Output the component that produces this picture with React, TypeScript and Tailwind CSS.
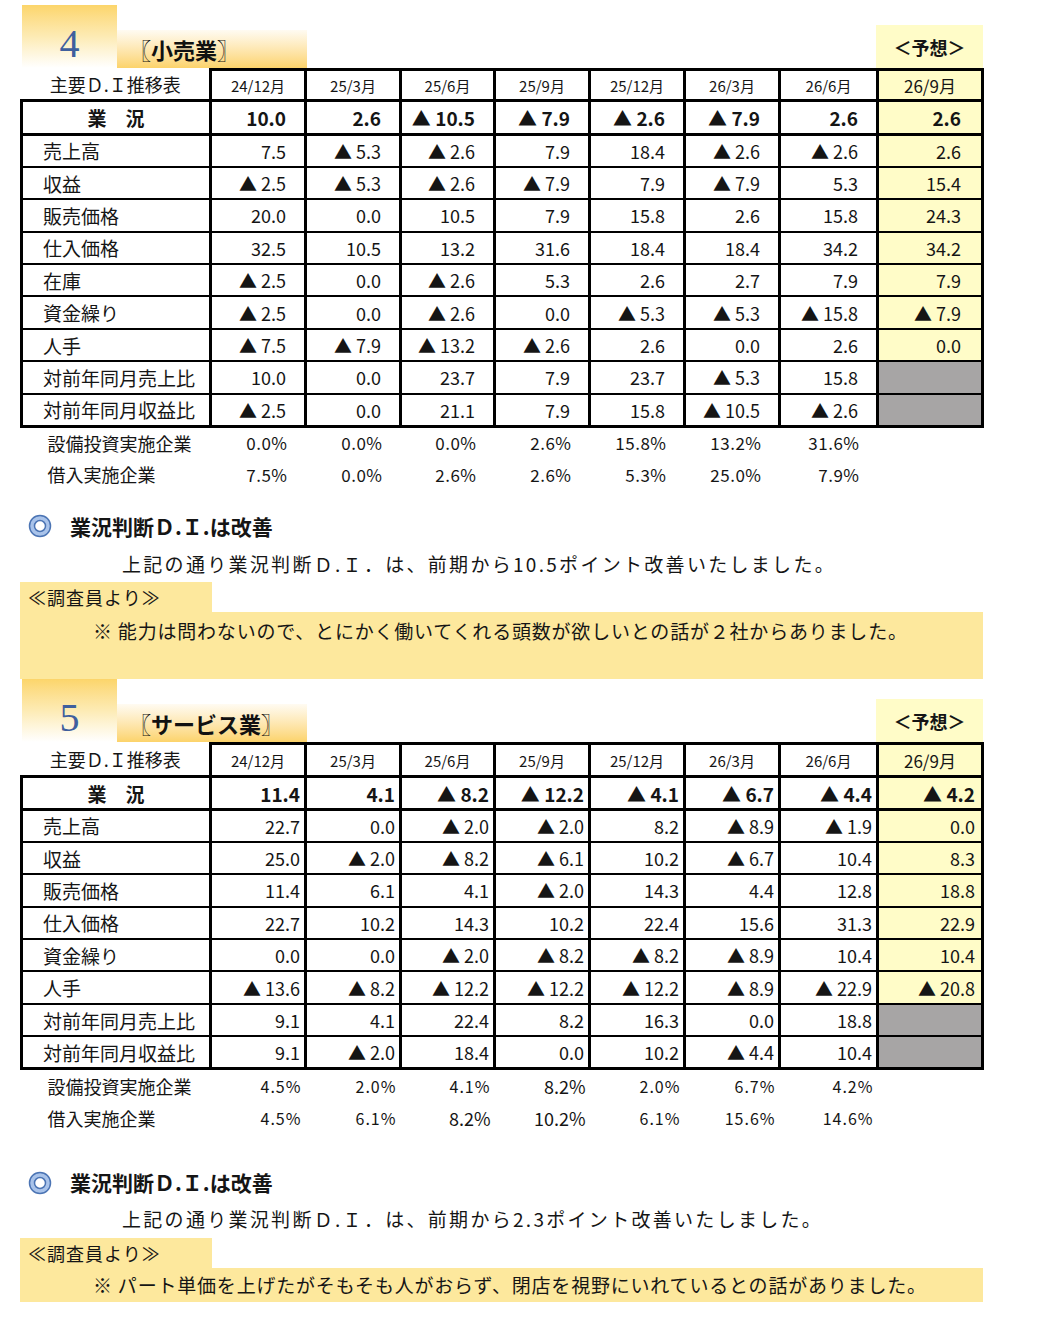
import React from 'react'

type Row = { label: string; values: (string | null)[] }
type Pct = { label: string; values: string[]; big?: number[] }

const cols = ['24/12月', '25/3月', '25/6月', '25/9月', '25/12月', '26/3月', '26/6月', '26/9月']

const retail = {
  no: '4',
  title: '〖小売業〗',
  top: ['10.0', '2.6', '▲10.5', '▲7.9', '▲2.6', '▲7.9', '2.6', '2.6'],
  rows: [
    { label: '売上高', values: ['7.5', '▲5.3', '▲2.6', '7.9', '18.4', '▲2.6', '▲2.6', '2.6'] },
    { label: '収益', values: ['▲2.5', '▲5.3', '▲2.6', '▲7.9', '7.9', '▲7.9', '5.3', '15.4'] },
    { label: '販売価格', values: ['20.0', '0.0', '10.5', '7.9', '15.8', '2.6', '15.8', '24.3'] },
    { label: '仕入価格', values: ['32.5', '10.5', '13.2', '31.6', '18.4', '18.4', '34.2', '34.2'] },
    { label: '在庫', values: ['▲2.5', '0.0', '▲2.6', '5.3', '2.6', '2.7', '7.9', '7.9'] },
    { label: '資金繰り', values: ['▲2.5', '0.0', '▲2.6', '0.0', '▲5.3', '▲5.3', '▲15.8', '▲7.9'] },
    { label: '人手', values: ['▲7.5', '▲7.9', '▲13.2', '▲2.6', '2.6', '0.0', '2.6', '0.0'] },
    { label: '対前年同月売上比', values: ['10.0', '0.0', '23.7', '7.9', '23.7', '▲5.3', '15.8', null] },
    { label: '対前年同月収益比', values: ['▲2.5', '0.0', '21.1', '7.9', '15.8', '▲10.5', '▲2.6', null] },
  ] as Row[],
  pct: [
    { label: '設備投資実施企業', values: ['0.0%', '0.0%', '0.0%', '2.6%', '15.8%', '13.2%', '31.6%'] },
    { label: '借入実施企業', values: ['7.5%', '0.0%', '2.6%', '2.6%', '5.3%', '25.0%', '7.9%'] },
  ] as Pct[],
}

const service = {
  no: '5',
  title: '〖サービス業〗',
  top: ['11.4', '4.1', '▲8.2', '▲12.2', '▲4.1', '▲6.7', '▲4.4', '▲4.2'],
  rows: [
    { label: '売上高', values: ['22.7', '0.0', '▲2.0', '▲2.0', '8.2', '▲8.9', '▲1.9', '0.0'] },
    { label: '収益', values: ['25.0', '▲2.0', '▲8.2', '▲6.1', '10.2', '▲6.7', '10.4', '8.3'] },
    { label: '販売価格', values: ['11.4', '6.1', '4.1', '▲2.0', '14.3', '4.4', '12.8', '18.8'] },
    { label: '仕入価格', values: ['22.7', '10.2', '14.3', '10.2', '22.4', '15.6', '31.3', '22.9'] },
    { label: '資金繰り', values: ['0.0', '0.0', '▲2.0', '▲8.2', '▲8.2', '▲8.9', '10.4', '10.4'] },
    { label: '人手', values: ['▲13.6', '▲8.2', '▲12.2', '▲12.2', '▲12.2', '▲8.9', '▲22.9', '▲20.8'] },
    { label: '対前年同月売上比', values: ['9.1', '4.1', '22.4', '8.2', '16.3', '0.0', '18.8', null] },
    { label: '対前年同月収益比', values: ['9.1', '▲2.0', '18.4', '0.0', '10.2', '▲4.4', '10.4', null] },
  ] as Row[],
  pct: [
    { label: '設備投資実施企業', values: ['4.5%', '2.0%', '4.1%', '8.2%', '2.0%', '6.7%', '4.2%'], big: [3] },
    { label: '借入実施企業', values: ['4.5%', '6.1%', '8.2%', '10.2%', '6.1%', '15.6%', '14.6%'], big: [2, 3] },
  ] as Pct[],
}

function Num({ v }: { v: string }) {
  if (v.startsWith('▲')) return <>▲ {v.slice(1)}</>
  return <>{v}</>
}

function Header({ no, title }: { no: string; title: string }) {
  return (
    <div className="flex items-end h-[63px]">
      <div className="ml-[2px] w-[95px] h-full bg-linear-to-b from-[#fcd56a] via-[#fdebb4] to-white flex items-center justify-center pt-[14px]">
        <span className="font-['Liberation_Serif',serif] text-[40px] leading-none text-[#3f5f9e]">{no}</span>
      </div>
      <div className="w-[190px] h-[38px] bg-linear-to-b from-[#fffbf2] to-[#fcd36a] flex items-center pl-[12px]">
        <span className="font-bold text-[22px] leading-none text-[#111]">{title}</span>
      </div>
      <div className="ml-auto w-[107px] h-[43px] bg-[#fffcc8] flex items-center justify-center">
        <span className="font-bold text-[18px] leading-none">＜予想＞</span>
      </div>
    </div>
  )
}

function DiTable({ data, tight }: { data: typeof retail; tight: boolean }) {
  const pr = tight ? 'pr-[4px]' : 'pr-[18px]'
  const prLast = tight ? 'pr-[6px]' : 'pr-[20px]'
  const headH = tight ? 'h-[33px]' : 'h-[31px]'
  const topH = tight ? 'h-[33px]' : 'h-[34px]'
  const pctSize = tight ? 'text-[16px] tracking-[1px]' : 'text-[17px] tracking-[0.5px]'
  return (
    <table className="table-fixed border-collapse w-[963px]">
      <colgroup>
        <col className="w-[189px]" />
        <col className="w-[95px]" />
        <col className="w-[95px]" />
        <col className="w-[94px]" />
        <col className="w-[95px]" />
        <col className="w-[95px]" />
        <col className="w-[95px]" />
        <col className="w-[98px]" />
        <col className="w-[105px]" />
      </colgroup>
      <thead>
        <tr className={headH}>
          <th className="p-0 font-normal text-[18px] leading-none text-center">主要Ｄ.Ｉ推移表</th>
          {cols.map((c, i) => (
            <th
              key={c}
              className={`p-0 border-[3px] border-black font-normal leading-none text-center ${i === 7 ? 'bg-[#fffcc8] text-[17px]' : 'text-[15px]'}`}
            >
              {c}
            </th>
          ))}
        </tr>
      </thead>
      <tbody>
        <tr className={topH}>
          <td className="p-0 border-[3px] border-black text-center font-bold text-[19px] leading-none">業　況</td>
          {data.top.map((v, i) => (
            <td
              key={i}
              className={`p-0 border-[3px] border-black text-right font-bold text-[19px] leading-none ${i === 7 ? `bg-[#fffcc8] ${prLast}` : pr}`}
            >
              <Num v={v} />
            </td>
          ))}
        </tr>
        {data.rows.map((r, ri) => {
          const last = ri === data.rows.length - 1
          const b = last ? 'border-b-[3px]' : 'border-b-2'
          return (
            <tr key={r.label} className="h-[32.4px]">
              <td className={`p-0 pl-[20px] border-x-[3px] ${b} border-black text-left text-[19px] leading-none`}>{r.label}</td>
              {r.values.map((v, i) => (
                <td
                  key={i}
                  className={`p-0 border-x-[3px] ${b} border-black text-right text-[18px] leading-none ${
                    v === null ? 'bg-[#a7a5a5]' : i === 7 ? `bg-[#fffcc8] ${prLast}` : pr
                  }`}
                >
                  {v !== null && <Num v={v} />}
                </td>
              ))}
            </tr>
          )
        })}
        {data.pct.map((p) => (
          <tr key={p.label} className={tight ? 'h-[33px]' : 'h-[32px]'}>
            <td className="p-0 pl-[26px] text-left text-[18px] leading-none">{p.label}</td>
            {p.values.map((v, i) => (
              <td
                key={i}
                className={`p-0 text-right leading-none ${pr} ${p.big?.includes(i) ? 'text-[18px]' : pctSize}`}
              >
                {v}
              </td>
            ))}
            <td />
          </tr>
        ))}
      </tbody>
    </table>
  )
}

function Summary({ point, note, tall }: { point: string; note: string; tall: boolean }) {
  return (
    <>
      <div className="flex items-center h-[32px]">
        <svg width="24" height="24" viewBox="0 0 24 24" className="ml-[8px]">
          <circle cx="12" cy="12" r="10.5" fill="#a9c3ea" stroke="#4b74b4" strokeWidth="1.5" />
          <circle cx="12" cy="12" r="5.5" fill="#ffffff" stroke="#4b74b4" strokeWidth="1.5" />
        </svg>
        <span className="ml-[18px] font-bold text-[21px] leading-none">業況判断Ｄ.Ｉ.は改善</span>
      </div>
      <div className={`${tall ? 'mt-[6px]' : 'mt-[5px]'} h-[30px] flex items-center pl-[102px] text-[19px] leading-none tracking-[2.3px]`}>
        上記の通り業況判断Ｄ.Ｉ．は、前期から{point}ポイント改善いたしました。
      </div>
      <div className="mt-[4px] w-[192px] h-[30px] bg-[#fde89d] flex items-center pl-[8px] text-[18px] leading-none tracking-[1px]">
        ≪調査員より≫
      </div>
      <div className={`bg-[#fde89d] pl-[73px] text-[19px] tracking-[0.8px] ${tall ? 'h-[67px] pt-[5px] leading-[28px]' : 'h-[34px] flex items-center leading-none'}`}>
        {note}
      </div>
    </>
  )
}

export default function App() {
  return (
    <div className="w-[1046px] h-[1344px] bg-white text-[#151515] font-['Noto_Sans_CJK_JP','Noto_Sans',sans-serif]">
      <div className="ml-[20px] w-[963px] pt-[5px]">
        <Header no={retail.no} title={retail.title} />
        <DiTable data={retail} tight={false} />
        <div className="mt-[20px]">
          <Summary
            point="10.5"
            note="※ 能力は問わないので、とにかく働いてくれる頭数が欲しいとの話が２社からありました。"
            tall
          />
        </div>
        <Header no={service.no} title={service.title} />
        <DiTable data={service} tight />
        <div className="mt-[32px]">
          <Summary
            point="2.3"
            note="※ パート単価を上げたがそもそも人がおらず、閉店を視野にいれているとの話がありました。"
            tall={false}
          />
        </div>
      </div>
    </div>
  )
}
